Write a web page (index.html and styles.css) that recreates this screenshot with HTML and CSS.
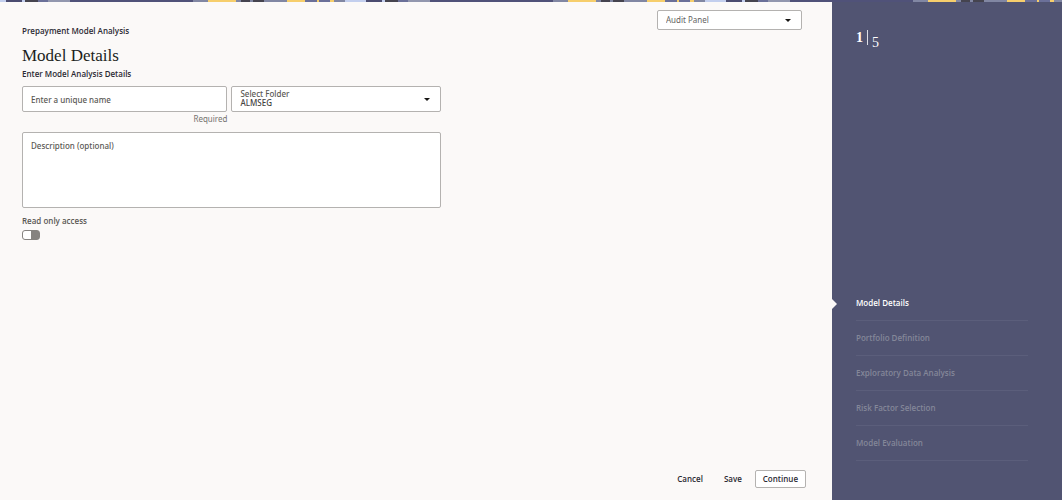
FILE: index.html
```
<!DOCTYPE html>
<html lang="en">
<head>
	<meta charset="utf-8">
	<title>Prepayment Model Analysis</title>
	<link rel="stylesheet" href="styles.css">
</head>
<body>
	<div class="strip"></div>
	<div class="page">
		<main class="main">
			<div class="top">
				<div class="heading">
					<p class="crumb">Prepayment Model Analysis</p>
					<h1>Model Details</h1>
					<h2>Enter Model Analysis Details</h2>
				</div>
				<div class="field audit">
					<select id="audit" aria-label="Audit Panel">
						<option>Audit Panel</option>
					</select>
					<svg class="arrow" viewBox="0 0 6 3"><path d="M0 0h6L3 3z"/></svg>
				</div>
			</div>
			<form class="form" id="details">
				<div class="row">
					<div class="name">
						<input class="field" type="text" id="name" aria-label="Name" placeholder="Enter a unique name">
						<p class="hint">Required</p>
					</div>
					<div class="field folder">
						<div class="folderText">
							<label for="folder">Select Folder</label>
							<select id="folder">
								<option>ALMSEG</option>
							</select>
						</div>
						<svg class="arrow" viewBox="0 0 6 3"><path d="M0 0h6L3 3z"/></svg>
					</div>
				</div>
				<textarea class="field" id="description" aria-label="Description" placeholder="Description (optional)"></textarea>
				<div class="access">
					<label for="readonly">Read only access</label>
					<input class="switch" type="checkbox" id="readonly">
				</div>
			</form>
			<div class="buttons">
				<button type="button">Cancel</button>
				<button type="button">Save</button>
				<button type="submit" form="details" class="continue">Continue</button>
			</div>
		</main>
		<aside class="side">
			<p class="count"><span class="current">1</span><span class="total">5</span></p>
			<ol class="steps">
				<li class="active">Model Details</li>
				<li>Portfolio Definition</li>
				<li>Exploratory Data Analysis</li>
				<li>Risk Factor Selection</li>
				<li>Model Evaluation</li>
			</ol>
		</aside>
	</div>
</body>
</html>
```
FILE: styles.css
```
* {
	box-sizing: border-box;
}

body {
	margin: 0;
	min-height: 100vh;
	display: flex;
	flex-direction: column;
	background-color: #fbf9f8;
	color: #2b2a33;
	font-family: "Open Sans", "Noto Sans", sans-serif;
	font-size: 8px;
	line-height: 12px;
}

h1, h2, p, ol {
	margin: 0;
	padding: 0;
}

/* coloured band, repeats along the top */
.strip {
	height: 2px;
	background-size: 360px 2px;
	background-image: linear-gradient(to right,
		#c3cfee 0 6px, #4b4c70 6px 22px, #c3cfee 22px 25px, #45444f 25px 38px,
		#6b7099 38px 48px, #9297ae 48px 70px, #505279 70px 193px,
		#8187a3 193px 208px, #f6ce6c 208px 236px, #8187a3 236px 241px,
		#45444f 241px 250px, #8187a3 250px 253px, #45444f 253px 264px,
		#8187a3 264px 287px, #f6ce6c 287px 305px, #6b7099 305px 317px,
		#f6ce6c 317px 319px, #6b7099 319px 330px, #f6ce6c 330px 334px,
		#8187a3 334px 345px, #c3cfee 345px 360px);
}

.page {
	flex: 1;
	display: flex;
}

.main {
	flex: 1;
	display: flex;
	flex-direction: column;
	padding: 8px 26px 12px 22px;
}

.top {
	display: flex;
	justify-content: space-between;
	align-items: flex-start;
}

.heading {
	padding-top: 15px;
}

.crumb {
	font-weight: 600;
}

h1 {
	margin-top: 7px;
	font-family: "Liberation Serif", serif;
	font-size: 17px;
	font-weight: normal;
	line-height: 24px;
	color: #201e1c;
}

h2 {
	font-size: 8px;
	font-weight: 600;
	line-height: 12px;
}

.field {
	border: 1px solid #b4b2b0;
	border-radius: 2px;
	background-color: #fff;
	color: #45433f;
	font: inherit;
	font-family: "Noto Sans", sans-serif;
}

.field select {
	flex: 1;
	appearance: none;
	border: 0;
	padding: 0;
	background: none;
	color: inherit;
	font: inherit;
}

.arrow {
	width: 6px;
	height: 3px;
	fill: #161513;
}

.audit {
	display: flex;
	align-items: center;
	width: 145px;
	height: 20px;
	margin-right: 4px;
	padding: 0 10px 0 8px;
	color: #65635f;
}

.form {
	max-width: 419px;
	margin-top: 6px;
	font-weight: 500;
}

.row {
	display: grid;
	grid-template-columns: 50fr 51fr;
	align-items: start;
	gap: 4px;
}

input.field {
	display: block;
	width: 100%;
	height: 26px;
	padding: 0 8px;
}

.field::placeholder {
	color: #5a5854;
	opacity: 1;
}

.hint {
	margin-top: 1px;
	text-align: right;
	font-family: "Noto Sans", sans-serif;
	font-weight: normal;
	color: #75736f;
}

.folder {
	display: flex;
	align-items: center;
	height: 26px;
	padding: 0 10px 0 8px;
}

.folderText {
	flex: 1;
	display: flex;
	flex-direction: column;
	padding-bottom: 2px;
	line-height: 9px;
}

.folderText label, .access {
	color: #5a5854;
}

textarea.field {
	display: block;
	width: 100%;
	height: 76px;
	margin-top: 7px;
	padding: 7px 8px;
	resize: none;
}

.access {
	display: flex;
	flex-direction: column;
	align-items: flex-start;
	gap: 3px;
	margin-top: 7px;
	font-weight: 600;
}

.switch {
	appearance: none;
	width: 18px;
	height: 10px;
	margin: 0;
	border: 1px solid #868380;
	border-radius: 3px;
	background: linear-gradient(to right, #fff 8px, #868380 8px);
}

.switch:checked {
	background: linear-gradient(to right, #868380 8px, #fff 8px);
}

.buttons {
	display: flex;
	justify-content: flex-end;
	gap: 5px;
	margin-top: auto;
}

button {
	height: 18px;
	padding: 0 7px;
	border: 1px solid transparent;
	border-radius: 2px;
	background: none;
	color: #2b2a33;
	font: inherit;
	font-weight: 600;
}

.continue {
	border-color: #b4b2b0;
	background-color: #fff;
}

.side {
	width: 230px;
	display: flex;
	flex-direction: column;
	justify-content: space-between;
	padding: 28px 34px 39px 24px;
	background-color: #515472;
	color: #fff;
}

.count {
	display: flex;
	align-items: flex-start;
	font-family: "Liberation Serif", serif;
	font-size: 14px;
	line-height: 15px;
}

.current {
	padding-right: 4px;
	border-right: 1px solid #dcdde5;
	font-weight: bold;
}

.total {
	padding: 5px 0 0 4px;
}

.steps {
	list-style: none;
}

.steps li {
	height: 35px;
	padding-top: 11px;
	border-bottom: 1px solid #5b5e7b;
	color: #848799;
	font-weight: 600;
}

.steps .active {
	position: relative;
	color: #fff;
}

/* pointer on the edge of the sidebar */
.active::before {
	content: "";
	position: absolute;
	left: -24px;
	top: 13px;
	border: 5px solid transparent;
	border-left-color: #fbf9f8;
	border-right: 0;
}
```
